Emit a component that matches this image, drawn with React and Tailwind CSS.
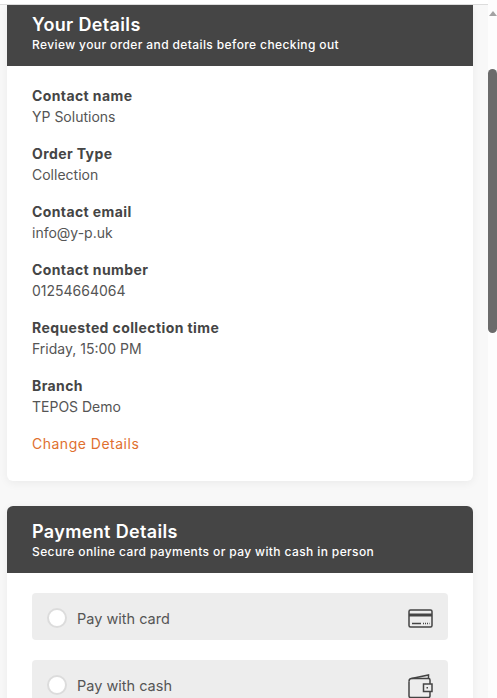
const details = [
  { label: 'Contact name', value: 'YP Solutions' },
  { label: 'Order Type', value: 'Collection' },
  { label: 'Contact email', value: 'info@y-p.uk' },
  { label: 'Contact number', value: '01254664064' },
  { label: 'Requested collection time', value: 'Friday, 15:00 PM' },
  { label: 'Branch', value: 'TEPOS Demo' },
];

function CardIcon() {
  return (
    <svg width="25" height="19" viewBox="0 0 25 19" fill="none" stroke="#444" strokeWidth="1.500">
      <rect x="1" y="1" width="23" height="17" rx="1.500" />
      <path d="M1 6h23" strokeWidth="3" />
      <path d="M4 14.500h9" />
      <path d="M15 14.500h6.500" strokeDasharray="1 1" />
    </svg>
  );
}

function WalletIcon() {
  return (
    <svg width="25" height="24" viewBox="0 0 25 24" fill="none" stroke="#444" strokeWidth="1.500">
      <path d="M3.500 4.500 20.500 1V5" />
      <path d="M1 7.500c0-2 1-3 2.500-3H20.500c1.200 0 1.500.8 1.500 1.500v4" />
      <path d="M1 7.500V22c0 1 .5 1.500 1.500 1.500H20.500c1 0 1.500-.5 1.500-1.500v-4" />
      <rect x="15.500" y="10" width="8.500" height="7.500" />
      <path d="M18.500 13.700h1.500" />
    </svg>
  );
}

function CardHeader({ title, subtitle, className }) {
  return (
    <div className={`bg-[#454545] px-[25px] text-white ${className}`}>
      <h2 className="text-[18px] font-semibold leading-6 tracking-[0.35px]">{title}</h2>
      <p className="text-[12px] font-medium leading-4 tracking-[0.39px]">{subtitle}</p>
    </div>
  );
}

function PayOption({ label, icon, className }) {
  return (
    <div className={`flex h-[47px] items-center rounded-[4px] bg-[#ededed] px-[15px] pt-[3px] ${className}`}>
      <span className="h-5 w-5 rounded-full border-2 border-[#dcdcdc] bg-white" />
      <span className="ml-[10px] flex-1 text-[14.500px] leading-[21px] text-[#555]">{label}</span>
      <span className="pt-px">{icon}</span>
    </div>
  );
}

export default function App() {
  return (
    <div className="flex h-[698px] w-[497px] overflow-hidden bg-white font-['Inter',sans-serif] text-[#454545]">
      <div className="mt-1 h-full w-[488px] overflow-hidden border-t border-[#dcdcdc] bg-[#f8f8f8]">
        <section className="ml-[7px] w-[466px] overflow-hidden rounded-b-[6px] bg-white shadow-[0_2px_10px_rgba(0,0,0,0.06)]">
          <CardHeader
            title="Your Details"
            subtitle="Review your order and details before checking out"
            className="h-[61px] pt-2"
          />
          <div className="px-[25px] pb-[27px] pt-[19px]">
            {details.map((item) => (
              <div key={item.label} className="mb-4">
                <p className="text-[14px] font-bold leading-[21px] tracking-[0.4px]">{item.label}</p>
                <p className="text-[14px] leading-[21px] text-[#555]">{item.value}</p>
              </div>
            ))}
            <a className="block text-[14px] leading-[21px] tracking-[0.5px] text-[#e0702f]">Change Details</a>
          </div>
        </section>
        <section className="ml-[7px] mt-[25px] w-[466px] rounded-[6px] bg-white shadow-[0_2px_10px_rgba(0,0,0,0.06)]">
          <CardHeader
            title="Payment Details"
            subtitle="Secure online card payments or pay with cash in person"
            className="h-[67px] rounded-t-[6px] pt-[14px]"
          />
          <div className="px-[25px] pt-5">
            <PayOption label="Pay with card" icon={<CardIcon />} />
            <PayOption label="Pay with cash" icon={<WalletIcon />} className="mt-5" />
          </div>
        </section>
      </div>
      <div className="flex h-full w-[9px] flex-col items-center bg-[#fdfdfd] pt-[11px]">
        <span className="h-0 w-0 border-x-[4px] border-b-[5px] border-x-transparent border-b-[#a3a3a3]" />
        <span className="mt-[53px] h-[264px] w-[9px] rounded-[5px] bg-[#6b6b6b]" />
      </div>
    </div>
  );
}
